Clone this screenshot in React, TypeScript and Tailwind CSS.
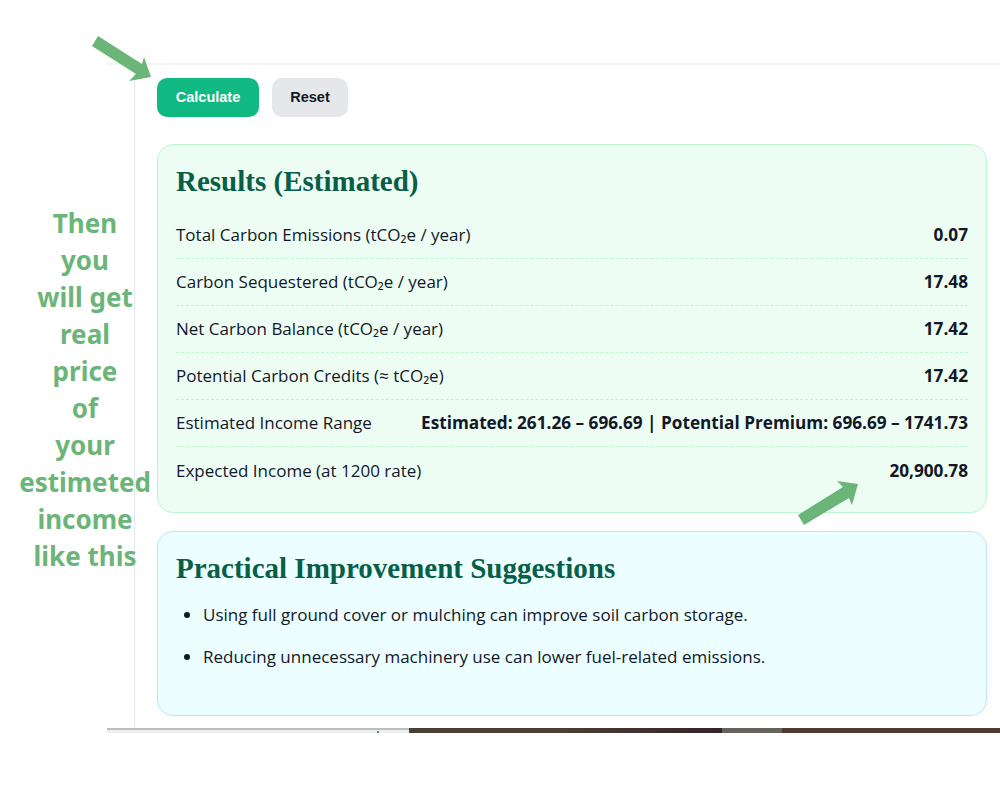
const rows: [string, string][] = [
  ["Total Carbon Emissions (tCO₂e / year)", "0.07"],
  ["Carbon Sequestered (tCO₂e / year)", "17.48"],
  ["Net Carbon Balance (tCO₂e / year)", "17.42"],
  ["Potential Carbon Credits (≈ tCO₂e)", "17.42"],
  ["Estimated Income Range", "Estimated: 261.26 – 696.69 | Potential Premium: 696.69 – 1741.73"],
  ["Expected Income (at 1200 rate)", "20,900.78"],
];
const notes = ["Then", "you", "will get", "real", "price", "of", "your", "estimeted", "income", "like this"];

export default function App() {
  return (
    <div className="relative w-[1000px] h-[800px] bg-white overflow-hidden font-['Open_Sans',sans-serif] text-[#111827]">
      <div className="pt-[63px] pl-[107px]">
        <div className="border-t-2 border-[#f3f4f6] pl-[27px]">
          <div className="border-l border-[#e5e7eb] pl-[22px] pr-[13px] h-[663px]">
            <div className="flex gap-[13px] pt-[13px] font-['Liberation_Sans',sans-serif] font-bold text-[14.5px]">
              <div className="w-[102px] h-[39px] rounded-[10px] bg-[#10b981] text-white flex items-center justify-center">Calculate</div>
              <div className="w-[76px] h-[39px] rounded-[10px] bg-[#e5e7eb] text-[#111827] flex items-center justify-center">Reset</div>
            </div>
            <section className="mt-[27px] h-[369px] rounded-[16px] border border-[#bbf7d0] bg-[#eefdf4] px-[18px] pt-[16px]">
              <h2 className="font-['Liberation_Serif',serif] font-bold text-[29px] leading-[40px] text-[#065f46]">Results (Estimated)</h2>
              <div className="mt-[11px]">
                {rows.map(([label, value], i) => (
                  <div key={label} className={`h-[47px] flex items-center justify-between text-[17px] ${i < 5 ? "border-b border-dashed border-[#bbf7d0]" : ""}`}>
                    <span>{label}</span>
                    <span className="font-bold text-[17.2px]">{value}</span>
                  </div>
                ))}
              </div>
            </section>
            <section className="mt-[18px] h-[185px] rounded-[16px] border border-[#bae6fd] bg-[#ecfeff] px-[18px] pt-[16px]">
              <h2 className="font-['Liberation_Serif',serif] font-bold text-[29px] leading-[40px] text-[#065f46]">Practical Improvement Suggestions</h2>
              <ul className="mt-[13px] list-disc pl-[27px] text-[17px]">
                <li className="h-[42px] leading-[28px]">Using full ground cover or mulching can improve soil carbon storage.</li>
                <li className="h-[42px] leading-[28px]">Reducing unnecessary machinery use can lower fuel-related emissions.</li>
              </ul>
            </section>
          </div>
        </div>
        <div className="flex h-[5px]">
          <div className="relative w-[302px] h-[5px] bg-[#eef0f1] border-t-2 border-[#bdbdbd]">
            <div className="absolute left-[270px] top-[1px] w-[2px] h-[2px] bg-[#3f8f8a]" />
          </div>
          <div className="w-[313px] h-[5px] bg-gradient-to-r from-[#4a3f33] via-[#4a3f33] to-[#33242a]" />
          <div className="w-[60px] h-[5px] bg-[#68625c]" />
          <div className="flex-1 h-[5px] bg-[#4e3a30]" />
        </div>
      </div>

      <div className="absolute left-[15px] top-[205px] w-[140px] text-center text-[#6cb578] font-['Noto_Sans',sans-serif] font-bold text-[26px] leading-[37px]">
        {notes.map((n) => (<div key={n}>{n}</div>))}
      </div>

      <svg className="absolute left-[90px] top-[34px]" width="65" height="50" viewBox="90 34 65 50">
        <polygon points="98,36 142,64 144,57 151,77 129,81 136,74 92,46" fill="#6cb578" />
      </svg>
      <svg className="absolute left-[795px] top-[478px]" width="70" height="50" viewBox="795 478 70 50">
        <polygon points="798,515 843,487 837,481 858,484 852,505 849,498 804,525" fill="#6cb578" />
      </svg>
    </div>
  );
}
